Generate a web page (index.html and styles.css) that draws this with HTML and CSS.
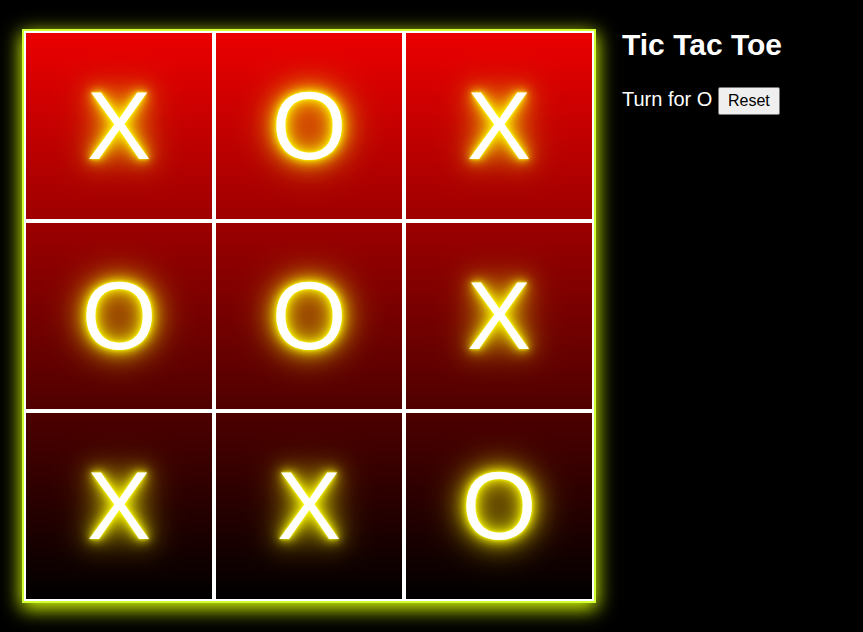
FILE: index.html
```html
<!DOCTYPE html>
<html>
<head>
<meta charset="utf-8">
<title>Tic Tac Toe</title>
<link rel="stylesheet" href="styles.css">
</head>
<body>
<div class="app">
  <div class="board">
    <div class="cell">X</div>
    <div class="cell">O</div>
    <div class="cell">X</div>
    <div class="cell">O</div>
    <div class="cell">O</div>
    <div class="cell">X</div>
    <div class="cell">X</div>
    <div class="cell">X</div>
    <div class="cell">O</div>
  </div>
  <div class="side">
    <h1 class="title">Tic Tac Toe</h1>
    <p class="status">Turn for O <button class="reset">Reset</button></p>
  </div>
</div>
</body>
</html>
```

FILE: styles.css
```css
html, body {
  margin: 0;
  padding: 0;
  background: #000;
}
body {
  font-family: "Liberation Sans", Arial, sans-serif;
  color: #fff;
}
.app {
  display: flex;
  align-items: flex-start;
  gap: 26px;
  padding: 29px 22px;
}
.board {
  display: grid;
  grid-template-columns: repeat(3, 190px);
  grid-template-rows: repeat(3, 190px);
  border: 2px solid #d2ff33;
  background: linear-gradient(to bottom, #ec0000, #000);
  box-shadow: 0 5px 18px 1px #d8ff00;
}
.cell {
  box-sizing: border-box;
  border: 2px solid #fff;
  display: flex;
  align-items: center;
  justify-content: center;
  font-size: 96px;
  color: #fff;
  text-shadow: 0 0 3px #ff0, 0 0 8px #ff0, 0 0 16px #ff0, 0 0 28px #ff0, 0 0 40px #e8e800;
}
.side {
  display: flex;
  flex-direction: column;
  gap: 25px;
}
.title {
  margin: -1px 0 0;
  font-size: 30px;
  font-weight: bold;
}
.status {
  margin: 0;
  font-size: 20px;
}
.reset {
  font-family: "Liberation Sans", Arial, sans-serif;
  font-size: 16px;
  padding: 4px 9px;
  border: 1px solid #767676;
  border-radius: 2px;
  background: #efefef;
  color: #000;
}
```
